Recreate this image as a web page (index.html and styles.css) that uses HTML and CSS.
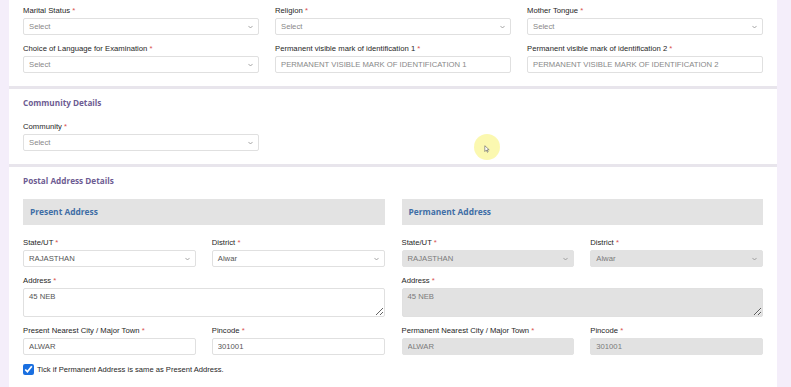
FILE: index.html
```html
<!DOCTYPE html>
<html lang="en">
<head>
<meta charset="utf-8">
<title>Application Form</title>
<link rel="stylesheet" href="styles.css">
</head>
<body>
<div class="page">
  <div class="cards">
    <section class="card card-first">
      <div class="grid3">
        <div class="field">
          <label class="lbl">Marital Status <span class="req">*</span></label>
          <div class="select"><span class="ph">Select</span><svg class="chev" viewBox="0 0 6 4" width="5" height="4"><path d="M0.5 0.7 L3 3.2 L5.5 0.7" fill="none" stroke="#8a8a8a" stroke-width="0.9"/></svg></div>
        </div>
        <div class="field">
          <label class="lbl">Religion <span class="req">*</span></label>
          <div class="select"><span class="ph">Select</span><svg class="chev" viewBox="0 0 6 4" width="5" height="4"><path d="M0.5 0.7 L3 3.2 L5.5 0.7" fill="none" stroke="#8a8a8a" stroke-width="0.9"/></svg></div>
        </div>
        <div class="field">
          <label class="lbl">Mother Tongue <span class="req">*</span></label>
          <div class="select"><span class="ph">Select</span><svg class="chev" viewBox="0 0 6 4" width="5" height="4"><path d="M0.5 0.7 L3 3.2 L5.5 0.7" fill="none" stroke="#8a8a8a" stroke-width="0.9"/></svg></div>
        </div>
        <div class="field">
          <label class="lbl">Choice of Language for Examination <span class="req">*</span></label>
          <div class="select"><span class="ph">Select</span><svg class="chev" viewBox="0 0 6 4" width="5" height="4"><path d="M0.5 0.7 L3 3.2 L5.5 0.7" fill="none" stroke="#8a8a8a" stroke-width="0.9"/></svg></div>
        </div>
        <div class="field">
          <label class="lbl">Permanent visible mark of identification 1 <span class="req">*</span></label>
          <input class="input" placeholder="PERMANENT VISIBLE MARK OF IDENTIFICATION 1">
        </div>
        <div class="field">
          <label class="lbl">Permanent visible mark of identification 2 <span class="req">*</span></label>
          <input class="input" placeholder="PERMANENT VISIBLE MARK OF IDENTIFICATION 2">
        </div>
      </div>
    </section>

    <section class="card">
      <h3 class="card-title">Community Details</h3>
      <div class="grid3">
        <div class="field">
          <label class="lbl">Community <span class="req">*</span></label>
          <div class="select"><span class="ph">Select</span><svg class="chev" viewBox="0 0 6 4" width="5" height="4"><path d="M0.5 0.7 L3 3.2 L5.5 0.7" fill="none" stroke="#8a8a8a" stroke-width="0.9"/></svg></div>
        </div>
      </div>
    </section>

    <section class="card card-last">
      <h3 class="card-title">Postal Address Details</h3>
      <div class="addr-wrap">
        <div class="addr">
          <div class="addr-head">Present Address</div>
          <div class="grid2">
            <div class="field">
              <label class="lbl">State/UT <span class="req">*</span></label>
              <div class="select"><span class="val">RAJASTHAN</span><svg class="chev" viewBox="0 0 6 4" width="5" height="4"><path d="M0.5 0.7 L3 3.2 L5.5 0.7" fill="none" stroke="#8a8a8a" stroke-width="0.9"/></svg></div>
            </div>
            <div class="field">
              <label class="lbl">District <span class="req">*</span></label>
              <div class="select"><span class="val">Alwar</span><svg class="chev" viewBox="0 0 6 4" width="5" height="4"><path d="M0.5 0.7 L3 3.2 L5.5 0.7" fill="none" stroke="#8a8a8a" stroke-width="0.9"/></svg></div>
            </div>
            <div class="field span2">
              <label class="lbl">Address <span class="req">*</span></label>
              <textarea class="area">45 NEB</textarea>
            </div>
            <div class="field">
              <label class="lbl">Present Nearest City / Major Town <span class="req">*</span></label>
              <input class="input" value="ALWAR">
            </div>
            <div class="field">
              <label class="lbl">Pincode <span class="req">*</span></label>
              <input class="input" value="301001">
            </div>
          </div>
          <label class="tick"><input type="checkbox" checked><span>Tick if Permanent Address is same as Present Address.</span></label>
        </div>
        <div class="addr">
          <div class="addr-head">Permanent Address</div>
          <div class="grid2">
            <div class="field">
              <label class="lbl">State/UT <span class="req">*</span></label>
              <div class="select disabled"><span class="val">RAJASTHAN</span><svg class="chev" viewBox="0 0 6 4" width="5" height="4"><path d="M0.5 0.7 L3 3.2 L5.5 0.7" fill="none" stroke="#8a8a8a" stroke-width="0.9"/></svg></div>
            </div>
            <div class="field">
              <label class="lbl">District <span class="req">*</span></label>
              <div class="select disabled"><span class="val">Alwar</span><svg class="chev" viewBox="0 0 6 4" width="5" height="4"><path d="M0.5 0.7 L3 3.2 L5.5 0.7" fill="none" stroke="#8a8a8a" stroke-width="0.9"/></svg></div>
            </div>
            <div class="field span2">
              <label class="lbl">Address <span class="req">*</span></label>
              <textarea class="area disabled" disabled>45 NEB</textarea>
            </div>
            <div class="field">
              <label class="lbl">Permanent Nearest City / Major Town <span class="req">*</span></label>
              <input class="input disabled" value="ALWAR" disabled>
            </div>
            <div class="field">
              <label class="lbl">Pincode <span class="req">*</span></label>
              <input class="input disabled" value="301001" disabled>
            </div>
          </div>
        </div>
      </div>
    </section>
  </div>
  <div class="cursor-hl"><svg class="cursor" viewBox="0 0 8 11" width="6" height="8"><path d="M1 1 L1 9 L3 7 L4.5 10 L5.6 9.4 L4.2 6.6 L7 6.6 Z" fill="#fff" stroke="#555" stroke-width="0.8"/></svg></div>
</div>
</body>
</html>
```

FILE: styles.css
```css
* { box-sizing: border-box; }

html, body {
  margin: 0;
  padding: 0;
}

body {
  background: #f4eefa;
  font-family: "Liberation Sans", Arial, sans-serif;
  color: #333;
  overflow: hidden;
}

.page {
  position: relative;
  height: 387px;
  padding: 0 14px 0 9px;
  overflow: hidden;
}

.cards {
  display: flex;
  flex-direction: column;
  gap: 3px;
  background: #e8e5ec;
}

.card {
  background: #fff;
  padding: 8px 14px 13px;
}

.card-first {
  padding-top: 5px;
  padding-bottom: 13px;
}

.card-title {
  margin: 0 0 12px;
  height: 12px;
  line-height: 12px;
  font-family: "Open Sans", sans-serif;
  font-weight: 700;
  font-size: 8.2px;
  color: #6d5c92;
}

.grid3 {
  display: grid;
  grid-template-columns: repeat(3, 1fr);
  column-gap: 16px;
  row-gap: 8px;
}

.field {
  display: flex;
  flex-direction: column;
  min-width: 0;
}

.lbl {
  height: 12px;
  line-height: 12px;
  margin-bottom: 1px;
  font-size: 7.7px;
  color: #262626;
  white-space: nowrap;
}

.req { color: #d9534f; }

.select,
.input {
  height: 17px;
  border: 1px solid #e0e0e0;
  border-radius: 2px;
  background: #fff;
  font-family: "Liberation Sans", Arial, sans-serif;
  font-size: 7.7px;
  color: #555;
  padding: 0 5px;
}

.select {
  display: flex;
  align-items: center;
  justify-content: space-between;
}

.ph { color: #888; }
.val { color: #555; }

.input {
  width: 100%;
  outline: none;
}

.input::placeholder { color: #888; }

.chev { flex: none; }

.disabled {
  background: #e2e2e2;
  border-color: #e2e2e2;
}

.disabled .val,
input.disabled,
textarea.disabled {
  color: #7a7a7a;
}

.addr-wrap {
  display: grid;
  grid-template-columns: 1fr 1fr;
  column-gap: 17px;
}

.addr-head {
  height: 26px;
  line-height: 26px;
  margin-bottom: 12px;
  padding-left: 7px;
  background: #e3e3e3;
  font-family: "Open Sans", sans-serif;
  font-weight: 700;
  font-size: 8.4px;
  color: #3f6ea6;
}

.grid2 {
  display: grid;
  grid-template-columns: 1fr 1fr;
  column-gap: 16px;
  row-gap: 8px;
}

.span2 { grid-column: span 2; }

.area {
  height: 29px;
  width: 100%;
  border: 1px solid #e0e0e0;
  border-radius: 2px;
  padding: 3px 5px;
  font-family: "Liberation Sans", Arial, sans-serif;
  font-size: 7.7px;
  color: #555;
  resize: vertical;
  outline: none;
}

.area.disabled { background: #e2e2e2; }

.tick {
  display: flex;
  align-items: center;
  gap: 3px;
  margin-top: 9px;
  font-size: 7.6px;
  color: #262626;
}

.tick input {
  width: 11px;
  height: 11px;
  margin: 0;
  accent-color: #1a6fe0;
}

.cursor-hl {
  position: absolute;
  left: 474px;
  top: 134px;
  width: 26px;
  height: 26px;
  border-radius: 50%;
  background: rgba(250, 246, 150, 0.75);
  display: flex;
  align-items: center;
  justify-content: center;
}

.cursor {
  margin-top: 4px;
}
```
